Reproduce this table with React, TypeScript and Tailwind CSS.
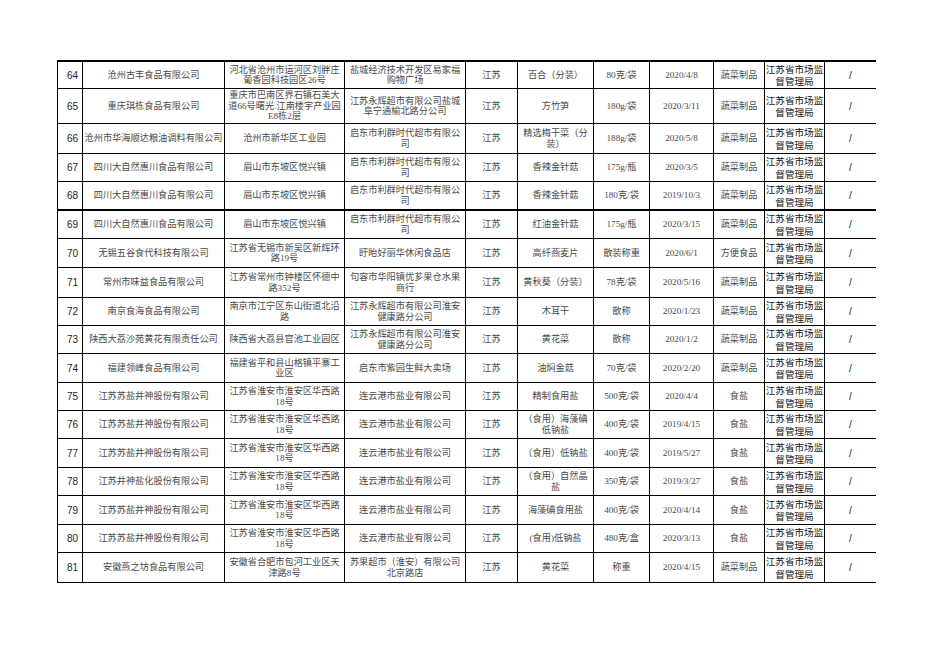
const cols = [
  "w-[25px]",
  "w-[142px]",
  "w-[120px]",
  "w-[121px]",
  "w-[52px]",
  "w-[76px]",
  "w-[56px]",
  "w-[64px]",
  "w-[51px]",
  "w-[60px]",
  "w-[51px]",
];

const heights: Record<number, string> = {
  27: "h-[27px]",
  28: "h-[28px]",
  29: "h-[29px]",
  30: "h-[30px]",
  35: "h-[35px]",
};

const salt = "江苏省淮安市淮安区华西路\n18号";
const lyg = "连云港市盐业有限公司";
const qd = "启东市利群时代超市有限公\n司";

// 序号, 生产企业, 企业地址, 被抽样单位, 所在省份, 食品名称, 规格, 生产日期, 分类, 公告来源, 备注
const rows: { h: number; c: string[] }[] = [
  { h: 27, c: ["64", "沧州古丰食品有限公司", "河北省沧州市运河区刘胖庄\n葡香园科技园区26号", "盐城经济技术开发区易家福\n购物广场", "江苏", "百合（分装）", "80克/袋", "2020/4/8", "蔬菜制品"] },
  { h: 35, c: ["65", "重庆琪栋食品有限公司", "重庆市巴南区界石镇石美大\n道66号曙光.江南楼宇产业园\nE8栋2层", "江苏永辉超市有限公司盐城\n阜宁通榆北路分公司", "江苏", "方竹笋", "180g/袋", "2020/3/11", "蔬菜制品"] },
  { h: 30, c: ["66", "沧州市华海顺达粮油调料有限公司", "沧州市新华区工业园", qd, "江苏", "精选梅干菜（分\n装）", "188g/袋", "2020/5/8", "蔬菜制品"] },
  { h: 28, c: ["67", "四川大自然惠川食品有限公司", "眉山市东坡区悦兴镇", qd, "江苏", "香辣金针菇", "175g/瓶", "2020/3/5", "蔬菜制品"] },
  { h: 29, c: ["68", "四川大自然惠川食品有限公司", "眉山市东坡区悦兴镇", qd, "江苏", "香辣金针菇", "180克/袋", "2019/10/3", "蔬菜制品"] },
  { h: 28, c: ["69", "四川大自然惠川食品有限公司", "眉山市东坡区悦兴镇", qd, "江苏", "红油金针菇", "175g/瓶", "2020/3/15", "蔬菜制品"] },
  { h: 29, c: ["70", "无锡五谷食代科技有限公司", "江苏省无锡市新吴区新辉环\n路19号", "盱眙好丽华休闲食品店", "江苏", "高纤燕麦片", "散装称重", "2020/6/1", "方便食品"] },
  { h: 30, c: ["71", "常州市味益食品有限公司", "江苏省常州市钟楼区怀德中\n路352号", "句容市华阳镇优芗果仓水果\n商行", "江苏", "黄秋葵（分装）", "78克/袋", "2020/5/16", "蔬菜制品"] },
  { h: 28, c: ["72", "南京食海食品有限公司", "南京市江宁区东山街道北沿\n路", "江苏永辉超市有限公司淮安\n健康路分公司", "江苏", "木耳干", "散称", "2020/1/23", "蔬菜制品"] },
  { h: 28, c: ["73", "陕西大荔沙苑黄花有限责任公司", "陕西省大荔县官池工业园区", "江苏永辉超市有限公司淮安\n健康路分公司", "江苏", "黄花菜", "散称", "2020/1/2", "蔬菜制品"] },
  { h: 29, c: ["74", "福建领峰食品有限公司", "福建省平和县山格镇平寨工\n业区", "启东市紫园生鲜大卖场", "江苏", "油焖金菇", "70克/袋", "2020/2/20", "蔬菜制品"] },
  { h: 28, c: ["75", "江苏苏盐井神股份有限公司", salt, lyg, "江苏", "精制食用盐", "500克/袋", "2020/4/4", "食盐"] },
  { h: 28, c: ["76", "江苏苏盐井神股份有限公司", salt, lyg, "江苏", "（食用）海藻碘\n低钠盐", "400克/袋", "2019/4/15", "食盐"] },
  { h: 29, c: ["77", "江苏苏盐井神股份有限公司", salt, lyg, "江苏", "（食用）低钠盐", "400克/袋", "2019/5/27", "食盐"] },
  { h: 28, c: ["78", "江苏井神盐化股份有限公司", salt, lyg, "江苏", "（食用）自然晶\n盐", "350克/袋", "2019/3/27", "食盐"] },
  { h: 29, c: ["79", "江苏苏盐井神股份有限公司", salt, lyg, "江苏", "海藻碘食用盐", "400克/袋", "2020/4/14", "食盐"] },
  { h: 28, c: ["80", "江苏苏盐井神股份有限公司", salt, lyg, "江苏", "(食用)低钠盐", "480克/盒", "2020/3/13", "食盐"] },
  { h: 30, c: ["81", "安徽燕之坊食品有限公司", "安徽省合肥市包河工业区天\n津路8号", "苏果超市（淮安）有限公司\n北京路店", "江苏", "黄花菜", "称重", "2020/4/15", "蔬菜制品"] },
];

function Row({ h, c, thick }: { h: number; c: string[]; thick: boolean }) {
  return (
    <div className={`flex ${heights[h]} ${thick ? "border-b-2" : "border-b"} border-black`}>
      <div className={`${cols[0]} shrink-0 flex items-center pl-[9px] border-r border-black font-['Liberation_Sans',sans-serif] text-[10px] text-[#1f1f1f]`}>
        {c[0]}
      </div>
      {c.slice(1).map((text, i) => (
        <div
          key={i}
          className={`${cols[i + 1]} shrink-0 flex items-center justify-center text-center whitespace-pre-line border-r border-black leading-[10.4px] text-[9.2px] text-[#4a4a4a] font-['Liberation_Serif','Noto_Sans_CJK_SC',serif]`}
        >
          {text}
        </div>
      ))}
      <div className={`${cols[9]} shrink-0 flex flex-col items-center justify-center border-r border-black text-[9.6px] leading-[12.5px] text-[#161616] font-['Noto_Sans_CJK_SC',sans-serif]`}>
        <span>江苏省市场监</span>
        <span>督管理局</span>
      </div>
      <div className={`${cols[10]} shrink-0 flex items-center justify-center text-[10px] text-[#222] font-['Liberation_Sans',sans-serif]`}>
        /
      </div>
    </div>
  );
}

export default function App() {
  return (
    <div className="w-[936px] h-[662px] bg-white overflow-hidden">
      <div className="ml-[57px] mt-[60px] w-[819px] border-l border-t-2 border-black">
        {rows.map((r) => (
          <Row key={r.c[0]} h={r.h} c={r.c} thick={r.c[0] === "68"} />
        ))}
      </div>
    </div>
  );
}
